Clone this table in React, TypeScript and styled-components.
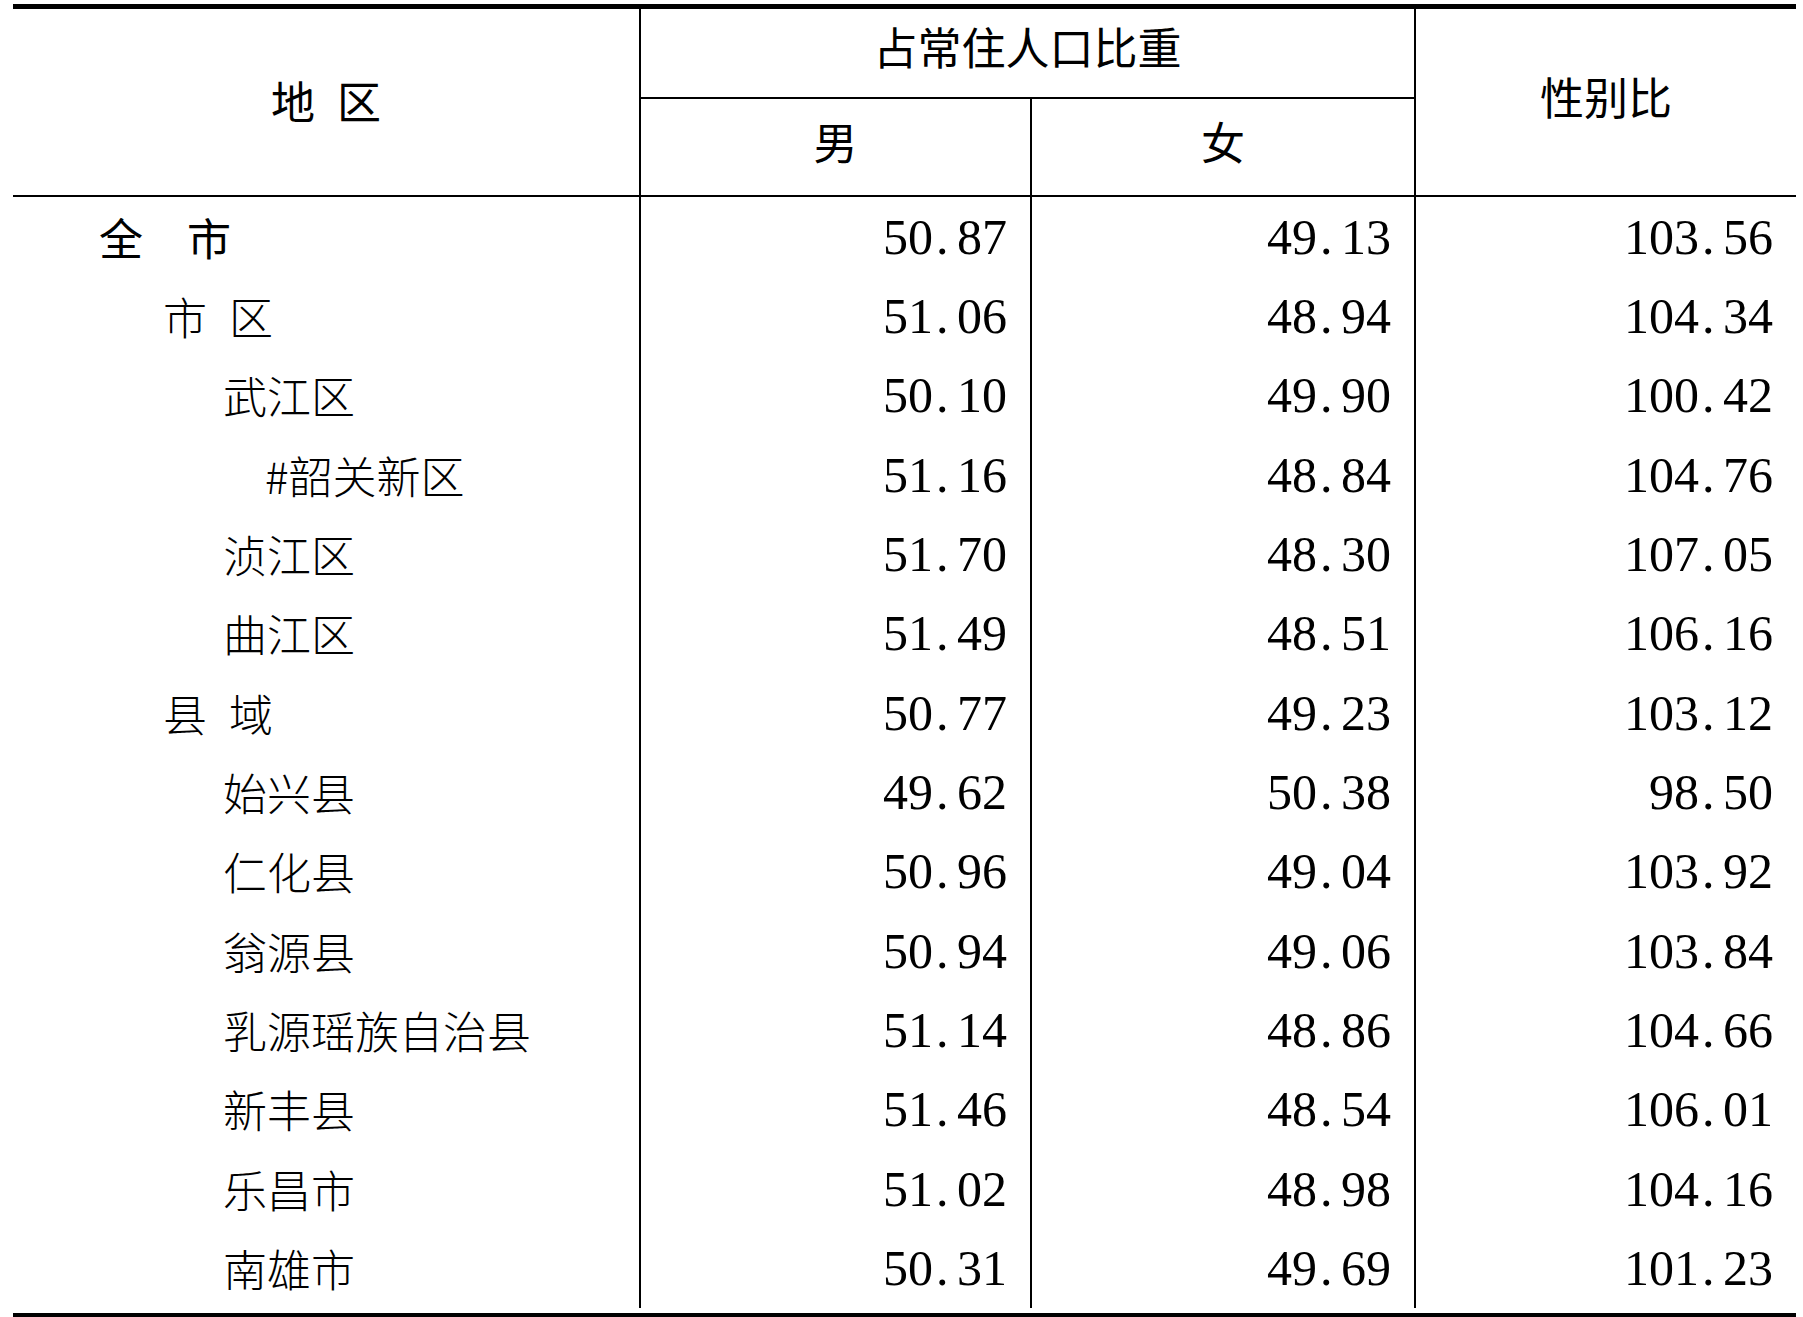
import React from "react";
import styled, { createGlobalStyle } from "styled-components";

const GlobalStyle = createGlobalStyle`
  html, body {
    margin: 0;
    padding: 0;
    background: #ffffff;
    overflow: hidden;
  }
  *, *::before, *::after {
    box-sizing: border-box;
  }
`;

const COLS = "626px 391px 384px 382px";

const Page = styled.div`
  padding: 4px 7px 0 13px;
  width: 1803px;
  color: #000;
`;

const Table = styled.div`
  width: 1783px;
  border-top: 5px solid #000;
  border-bottom: 5px solid #000;
`;

const Header = styled.div`
  display: grid;
  grid-template-columns: ${COLS};
  grid-template-rows: 90px 96px;
  border-bottom: 2px solid #000;
  font-family: "Noto Sans CJK SC", "Noto Sans", sans-serif;
  font-size: 44px;
  font-weight: 400;
`;

const HeadCell = styled.div<{
  $col: string;
  $row: string;
  $left?: boolean;
  $bottom?: boolean;
  $shift?: number;
}>`
  grid-column: ${(p) => p.$col};
  grid-row: ${(p) => p.$row};
  display: flex;
  align-items: center;
  justify-content: center;
  line-height: 1;
  white-space: pre;
  border-left: ${(p) => (p.$left ? "2px solid #000" : "none")};
  border-bottom: ${(p) => (p.$bottom ? "2px solid #000" : "none")};
  padding-bottom: ${(p) => p.$shift ?? 0}px;
`;

const Body = styled.div`
  display: flex;
  flex-direction: column;
  padding: 0 0 5px;
`;

const Row = styled.div`
  display: grid;
  grid-template-columns: ${COLS};
  height: 79.35px;
`;

const NameCell = styled.div<{ $indent: number; $strong?: boolean }>`
  display: flex;
  align-items: center;
  padding-left: ${(p) => p.$indent}px;
  font-family: "Noto Sans CJK SC", "Noto Sans", sans-serif;
  font-size: 44px;
  font-weight: ${(p) => (p.$strong ? 400 : 300)};
  line-height: 1;
  white-space: pre;
`;

const NumCell = styled.div`
  display: flex;
  align-items: center;
  justify-content: flex-end;
  padding-right: 23px;
  border-left: 2px solid #000;
  font-family: "Liberation Serif", "Times New Roman", serif;
  font-size: 50px;
  line-height: 1;
  white-space: pre;
`;

const Dot = styled.span`
  display: inline-block;
  width: 24px;
  padding-left: 3px;
  text-align: left;
`;

type Item = {
  name: string;
  level: number;
  male: string;
  female: string;
  ratio: string;
};

const INDENT = [86, 150, 210, 252];

const rows: Item[] = [
  { name: "全\u3000市", level: 0, male: "50.87", female: "49.13", ratio: "103.56" },
  { name: "市\u2002区", level: 1, male: "51.06", female: "48.94", ratio: "104.34" },
  { name: "武江区", level: 2, male: "50.10", female: "49.90", ratio: "100.42" },
  { name: "#韶关新区", level: 3, male: "51.16", female: "48.84", ratio: "104.76" },
  { name: "浈江区", level: 2, male: "51.70", female: "48.30", ratio: "107.05" },
  { name: "曲江区", level: 2, male: "51.49", female: "48.51", ratio: "106.16" },
  { name: "县\u2002域", level: 1, male: "50.77", female: "49.23", ratio: "103.12" },
  { name: "始兴县", level: 2, male: "49.62", female: "50.38", ratio: "98.50" },
  { name: "仁化县", level: 2, male: "50.96", female: "49.04", ratio: "103.92" },
  { name: "翁源县", level: 2, male: "50.94", female: "49.06", ratio: "103.84" },
  { name: "乳源瑶族自治县", level: 2, male: "51.14", female: "48.86", ratio: "104.66" },
  { name: "新丰县", level: 2, male: "51.46", female: "48.54", ratio: "106.01" },
  { name: "乐昌市", level: 2, male: "51.02", female: "48.98", ratio: "104.16" },
  { name: "南雄市", level: 2, male: "50.31", female: "49.69", ratio: "101.23" },
];

function Num({ value }: { value: string }) {
  const [int, frac] = value.split(".");
  return (
    <NumCell>
      {int}
      <Dot>.</Dot>
      {frac}
    </NumCell>
  );
}

export default function App() {
  return (
    <>
      <GlobalStyle />
      <Page>
        <Table>
          <Header>
            <HeadCell $col="1" $row="1 / span 2" $shift={4}>
              地{"\u2002"}区
            </HeadCell>
            <HeadCell $col="2 / span 2" $row="1" $left $bottom $shift={14}>
              占常住人口比重
            </HeadCell>
            <HeadCell $col="2" $row="2" $left $shift={13}>
              男
            </HeadCell>
            <HeadCell $col="3" $row="2" $left $shift={13}>
              女
            </HeadCell>
            <HeadCell $col="4" $row="1 / span 2" $left $shift={12}>
              性别比
            </HeadCell>
          </Header>
          <Body>
            {rows.map((r) => (
              <Row key={r.name}>
                <NameCell $indent={INDENT[r.level]} $strong={r.level === 0}>
                  {r.name}
                </NameCell>
                <Num value={r.male} />
                <Num value={r.female} />
                <Num value={r.ratio} />
              </Row>
            ))}
          </Body>
        </Table>
      </Page>
    </>
  );
}
